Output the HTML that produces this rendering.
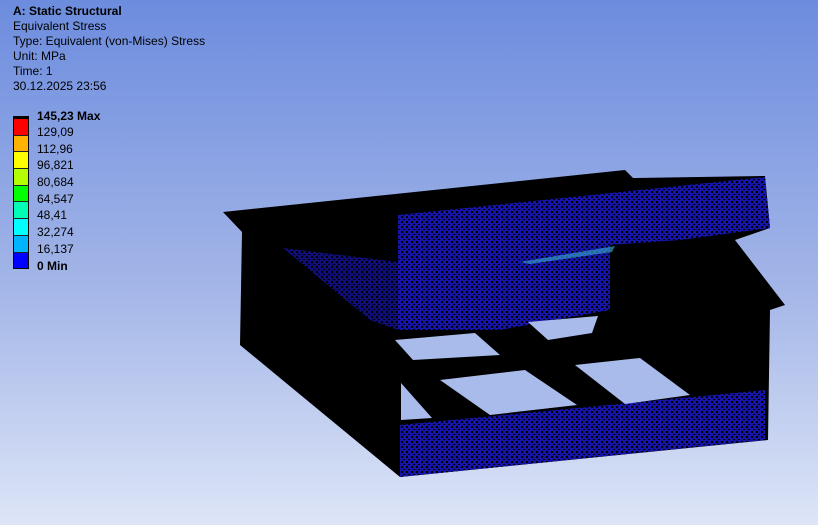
<!DOCTYPE html>
<html><head><meta charset="utf-8"><style>
body{margin:0;width:818px;height:525px;overflow:hidden;background:linear-gradient(#6c8cde,#a4b6e8 55%,#dde5f7);font-family:"Liberation Sans",sans-serif;position:relative}
.t{position:absolute;left:13px;font-size:12px;color:#000;line-height:15px}
.leg{position:absolute;left:13px;top:116px;width:14px;border:1px solid #000;border-top:3px solid #000}
.leg div{height:15.7px;border-bottom:1px solid #222}
.v{position:absolute;left:37px;font-size:12px}
svg{position:absolute;left:0;top:0}
</style></head><body>
<div class="t" style="top:4px"><b>A: Static Structural</b><br>Equivalent Stress<br>Type: Equivalent (von-Mises) Stress<br>Unit: MPa<br>Time: 1<br>30.12.2025 23:56</div>
<div class="leg"><div style="background:#f00"></div><div style="background:#ffb300"></div><div style="background:#ff0"></div><div style="background:#b4ff00"></div><div style="background:#0f0"></div><div style="background:#00ffb4"></div><div style="background:#0ff"></div><div style="background:#00b4ff"></div><div style="background:#0000ff;border-bottom:0"></div></div>
<div class="v" style="top:109px"><b>145,23 Max</b></div>
<div class="v" style="top:125px">129,09</div>
<div class="v" style="top:142px">112,96</div>
<div class="v" style="top:158px">96,821</div>
<div class="v" style="top:175px">80,684</div>
<div class="v" style="top:192px">64,547</div>
<div class="v" style="top:208px">48,41</div>
<div class="v" style="top:225px">32,274</div>
<div class="v" style="top:242px">16,137</div>
<div class="v" style="top:259px"><b>0 Min</b></div>
<svg width="818" height="525">
<defs><pattern id="m" width="5" height="5" patternUnits="userSpaceOnUse"><rect width="5" height="5" fill="#1414a8"/><rect x="1" y="1" width="2" height="2" fill="#000"/><rect x="3" y="4" width="2" height="1" fill="#000"/></pattern></defs>
<polygon fill="#000" points="223,212 625,170 633,178 765,176 770,228 735,240 785,305 770,310 768,440 400,477 240,345 242,232"/>
<polygon fill="url(#m)" points="398,215 765,177 770,228 680,240 610,245 610,310 500,330 398,330"/>
<polygon fill="url(#m)" opacity=".7" points="283,248 398,262 398,330 370,320"/>
<polygon fill="url(#m)" points="400,425 765,390 765,440 400,477"/>
<polygon fill="#3ab0d8" opacity=".6" points="520,262 615,246 612,252 530,264"/>
<g fill="#a9bbea">
<polygon points="395,340 475,333 500,355 413,360"/>
<polygon points="528,322 598,316 592,333 548,340"/>
<polygon points="440,380 525,370 577,405 490,415"/>
<polygon points="575,365 640,358 690,395 625,404"/>
<polygon points="401,383 432,418 401,420"/>
</g>
</svg>
</body></html>
